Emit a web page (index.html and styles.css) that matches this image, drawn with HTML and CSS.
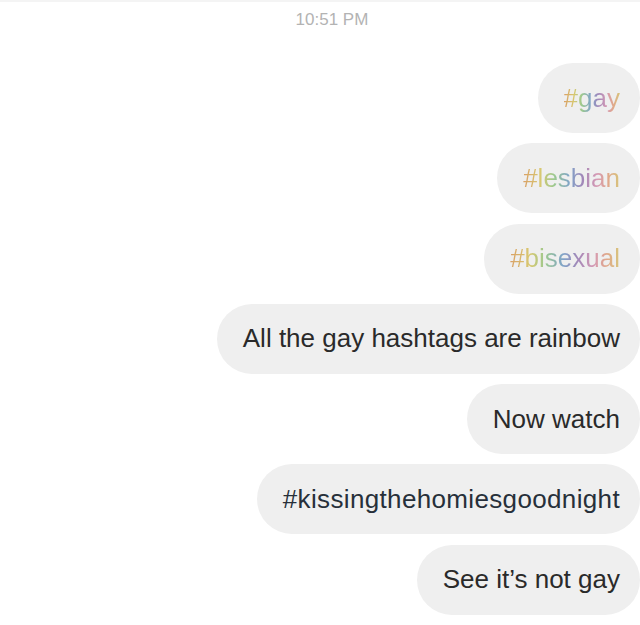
FILE: index.html
```html
<!DOCTYPE html>
<html>
<head>
<meta charset="utf-8">
<link rel="stylesheet" href="styles.css">
</head>
<body>
<div class="chat">
  <div class="time">10:51 PM</div>
  <div class="msgs">
    <div class="bubble"><span class="rainbow">#gay</span></div>
    <div class="bubble"><span class="rainbow">#lesbian</span></div>
    <div class="bubble"><span class="rainbow">#bisexual</span></div>
    <div class="bubble">All the gay hashtags are rainbow</div>
    <div class="bubble">Now watch</div>
    <div class="bubble tag">#kissingthehomiesgoodnight</div>
    <div class="bubble">See it’s not gay</div>
  </div>
</div>
</body>
</html>
```

FILE: styles.css
```css
html, body {
  margin: 0;
  padding: 0;
  background: #ffffff;
}
body {
  width: 640px;
  height: 625px;
  overflow: hidden;
  font-family: "Liberation Sans", Arial, sans-serif;
}
.chat {
  display: flex;
  flex-direction: column;
  border-top: 2px solid #f4f4f4;
}
.time {
  text-align: center;
  padding-left: 24px;
  color: #b3b3b3;
  font-size: 17px;
  line-height: 20px;
  padding-top: 8px;
  height: 48px;
  box-sizing: border-box;
}
.msgs {
  display: flex;
  flex-direction: column;
  align-items: flex-end;
  gap: 10.3px;
  margin-top: 13px;
}
.bubble {
  height: 70px;
  display: flex;
  align-items: center;
  background: #efefef;
  border-radius: 35px;
  padding: 0 20px 0 26px;
  font-size: 26px;
  color: #2a2a2a;
}
.tag {
  color: #27303a;
  letter-spacing: 0.35px;
}
.rainbow {
  background: linear-gradient(90deg, #d9a066 0%, #d8c870 18%, #9cc98f 32%, #7fa3c8 48%, #a387b8 62%, #d59ab5 76%, #e0a88a 88%, #d7c57b 100%);
  -webkit-background-clip: text;
  background-clip: text;
  color: transparent;
}
```
